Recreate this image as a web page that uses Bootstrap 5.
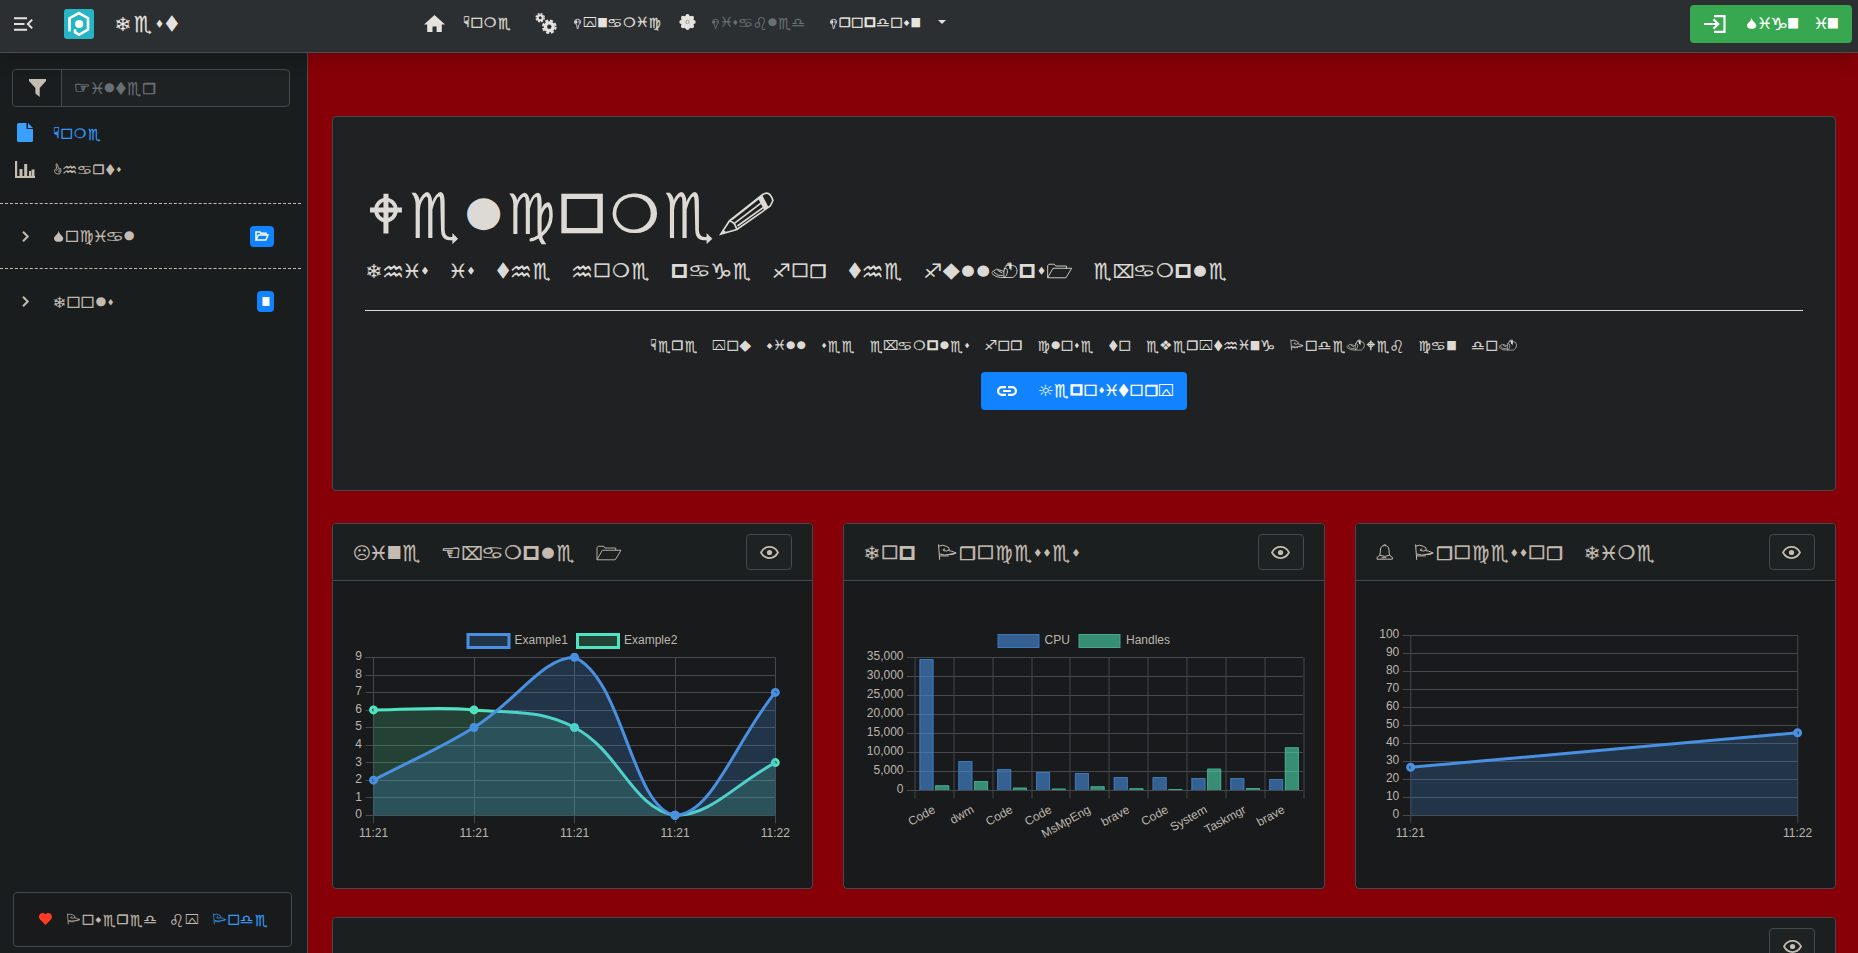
<!DOCTYPE html>
<html lang="en" data-bs-theme="dark">
<head>
<meta charset="utf-8">
<title>Test</title>
<link href="https://cdn.jsdelivr.net/npm/bootstrap@5.3.0/dist/css/bootstrap.min.css" rel="stylesheet">
<script src="https://cdn.jsdelivr.net/npm/bootstrap@5.3.0/dist/js/bootstrap.bundle.min.js"></script>
<style>
html,body{height:100%;overflow:hidden}
body{background:#870007;color:#dddad5;font-family:"Liberation Sans",sans-serif;font-size:14px}
svg{display:block;flex:none;overflow:visible}
h1{color:inherit}
.sym{display:block;flex:none}
.topbar{height:53px;background:#2b2f32;border-bottom:1px solid #484e51;padding:0 6px 5px 13.5px;box-shadow:0 8px 16px rgba(0,0,0,.15);color:#e6e3df;position:relative;z-index:2}
.topbar .nav-sym{margin-top:-2px}
.caret{border:4px solid transparent;border-top-color:#e6e3df;border-bottom:0;margin:-3px 0 0 18px}
.signin{width:162px;height:38px;background:#37a84f;border:0;border-radius:4px;padding:0 14px;color:#fff}
.side{width:308px;background:#1a1d1e;border-right:1px solid #484e51;color:#c4bcb1}
.filterbox{height:38px;width:278px;margin:16px 0 0 12px;border:1px solid #43494c;border-radius:4px;background:#1f2223}
.filterbox .fi{width:49px;height:100%;border-right:1px solid #43494c;background:#1a1d1e;padding-left:16px;border-radius:4px 0 0 4px}
.side-row{height:36.6px;padding-left:15px}
.side-row .ic{width:39px}
.group{width:301px;border-top:1px dashed #c4bcb1;height:65.7px;padding-left:15px;padding-right:27px}
.group .ic{width:39px;padding-left:7px}
.pill{height:21px;background:#1283ff;border-radius:4px;color:#fff}
.powered{width:279px;height:55px;margin:auto 0 6px 13px;border:1px solid #43494c;border-radius:4px;background:#181a1b;padding:0 0 1px 25px}
.main{padding:63px 22px 0 24px;min-width:0;overflow:hidden}
.card{border:1px solid #43494c;border-radius:4px;background:#181a1b;overflow:hidden}
.hero{height:375px;background:#1f2122;padding:75px 32px 0}
.hero hr{margin:32px 0 0;border-color:#dddad5;opacity:1}
.cta{width:206px;height:38px;border:0;border-radius:4px;background:#1283ff;color:#fff;padding:0 14px 0 16px}
.tiles{margin-top:32px;gap:30px}
.tiles .card{flex:1 1 0;min-width:0;height:366px}
.head{height:57px;background:#1b1f20;border-bottom:1px solid #43494c;padding:0 20px 0 21px;color:#c4bcb1}
.eye{width:46px;height:36px;border:1px solid #43494c;border-radius:4px;background:#1f2223;color:#c4bcb1;padding:0}
.last{margin-top:28px;height:100px}
.plot text{font:12px "Liberation Sans",sans-serif;fill:#bdb6ad}
</style>
</head>
<body class="d-flex flex-column">
<header class="topbar d-flex align-items-center flex-shrink-0">
  <svg width="19" height="14" viewBox="0 0 19 14" fill="none" stroke="currentColor" stroke-width="2"><path d="M0 1.2h13M0 7h10.5M0 12.8h13M18.2 2.6 13.8 7l4.4 4.4"/></svg>
  <svg style="margin-left:31.5px" width="30" height="30" viewBox="0 0 30 30"><rect width="30" height="30" rx="3" fill="#25b5c5"/><path d="M5.500 22.500V9.200L15 4l9 5.200v11.300L15 25.800l-4-2.600v-3" fill="none" stroke="#fff" stroke-width="2.600"/><circle cx="15.200" cy="15" r="4.100" fill="#fff"/></svg>
  <span class="sym" style="margin-left:22px" data-t="Test" data-s="20" data-w="62"></span>
  <nav class="d-flex align-items-center" style="margin-left:245.500px">
    <svg width="21" height="17" viewBox="0 0 21 17" fill="currentColor"><path d="M10.500 0 21 9.500h-3.200V17H12.600v-5.500H8.500V17H3.200V9.500H0z"/></svg>
    <span class="sym nav-sym" style="margin-left:19px" data-t="Home" data-s="14" data-w="46"></span>
    <svg style="margin-left:25px" width="22" height="21" viewBox="0 0 22 21" fill="none" stroke="currentColor"><circle cx="5.200" cy="4.700" r="2.500" stroke-width="2"/><circle cx="5.200" cy="4.700" r="4" stroke-width="1.500" stroke-dasharray="2 1.140"/><circle cx="14.300" cy="13.700" r="3.900" stroke-width="3.400"/><circle cx="14.300" cy="13.700" r="6.300" stroke-width="2" stroke-dasharray="3 1.950"/></svg>
    <span class="sym nav-sym" style="margin-left:17.500px" data-t="Dynamic" data-s="14" data-w="86"></span>
    <svg style="margin:-4px 0 0 19px" width="17" height="16" viewBox="0 0 17 16" fill="currentColor"><circle cx="8.500" cy="8" r="6.600"/><g><circle cx="8.500" cy="2" r="2"/><circle cx="8.500" cy="14" r="2"/><circle cx="2.300" cy="8" r="2"/><circle cx="14.700" cy="8" r="2"/><circle cx="4" cy="3.700" r="2"/><circle cx="13" cy="3.700" r="2"/><circle cx="4" cy="12.300" r="2"/><circle cx="13" cy="12.300" r="2"/></g><circle cx="8.500" cy="8" r="1.700" fill="none" stroke="#8b8d8e" stroke-width=".8"/></svg>
    <span class="sym nav-sym" style="margin-left:15.500px;color:#686f75" data-t="Disabled" data-s="14" data-w="92"></span>
    <span class="sym nav-sym" style="margin-left:26.500px" data-t="Dropdown" data-s="14" data-w="90"></span>
    <span class="caret"></span>
  </nav>
  <button class="signin ms-auto d-flex align-items-center">
    <svg width="22" height="18" viewBox="0 0 22 18" fill="none" stroke="currentColor" stroke-width="2.200"><path d="M10 1.200h10.500v15.600H10M0 9h14M9.500 4.300 14.200 9l-4.700 4.700"/></svg>
    <span class="sym" style="margin:-2px 0 0 21px" data-t="Sign In" data-s="16" data-w="91"></span>
  </button>
</header>
<div class="d-flex flex-fill" style="min-height:0">
  <aside class="side d-flex flex-column flex-shrink-0">
    <div class="filterbox d-flex align-items-center">
      <div class="fi d-flex align-items-center"><svg width="17" height="18" viewBox="0 0 17 18" fill="currentColor"><path d="M0 0h17v2l-6.300 7v9L6.400 14.500V9L0 2z"/></svg></div>
      <span class="sym" style="margin-left:13px;color:#686f75" data-t="Filter" data-s="16" data-w="80"></span>
    </div>
    <div style="height:7.500px"></div>
    <div class="side-row d-flex align-items-center" style="color:#38a0ff"><span class="ic"><svg style="margin-left:2px" width="16" height="19" viewBox="0 0 16 19" fill="currentColor"><path d="M1.500 0H9.500v6H16v11.500a1.500 1.500 0 0 1-1.500 1.500H1.500A1.500 1.500 0 0 1 0 17.500v-16A1.500 1.500 0 0 1 1.500 0zM11 0l5 5h-5z"/></svg></span><span class="sym" data-t="Home" data-s="14" data-w="46"></span></div>
    <div class="side-row d-flex align-items-center"><span class="ic"><svg width="20" height="17" viewBox="0 0 20 17" fill="currentColor"><path d="M0 0h2.200v15H20v2H0zM4.500 8h3v7h-3zM9.200 3h3v12h-3zM14 10h2V15h-2zM16.500 8.500h3V15h-3z"/></svg></span><span class="sym" data-t="Charts" data-s="14" data-w="67"></span></div>
    <div style="height:15px"></div>
    <div class="group d-flex align-items-center"><span class="ic"><svg width="7" height="11" viewBox="0 0 7 11" fill="none" stroke="currentColor" stroke-width="2"><path d="M1 .8 5.700 5.500 1 10.200"/></svg></span><span class="sym" data-t="Social" data-s="16" data-w="80"></span>
      <span class="pill ms-auto d-flex align-items-center justify-content-center" style="width:24px"><svg width="14" height="10" viewBox="0 0 14 10" fill="none" stroke="currentColor" stroke-width="1.500"><path d="M1 8.800V1h4l1 1.200h5V4M1 9 3.500 4H13l-2.200 5z"/></svg></span></div>
    <div class="group d-flex align-items-center"><span class="ic"><svg width="7" height="11" viewBox="0 0 7 11" fill="none" stroke="currentColor" stroke-width="2"><path d="M1 .8 5.700 5.500 1 10.200"/></svg></span><span class="sym" data-t="Tools" data-s="16" data-w="59"></span>
      <span class="pill ms-auto d-flex align-items-center justify-content-center" style="width:17px"><svg width="8" height="9" viewBox="0 0 8 9" fill="currentColor"><path d="M.5 0h7v9h-7z"/></svg></span></div>
    <div class="powered d-flex align-items-center">
      <svg width="13" height="12" viewBox="0 0 13 12" fill="#ff3b22"><path d="M6.500 12 1 6.500C-1.500 3.500 1 0 3.600 0 5 0 6 .7 6.500 1.600 7 .7 8 0 9.400 0 12 0 14.500 3.500 12 6.500z"/></svg>
      <span class="sym" style="margin-left:15px" data-t="Powered" data-s="14" data-w="89"></span>
      <span class="sym" style="margin-left:15px" data-t="by" data-s="14" data-w="27"></span>
      <span class="sym" style="margin-left:15px;color:#38a0ff" data-t="Pode" data-s="14" data-w="54"></span>
    </div>
  </aside>
  <main class="main flex-fill">
    <section class="card hero">
      <h1 class="m-0"><span class="sym" style="margin-left:5px" data-t="Welcome!" data-s="56" data-w="404"></span></h1>
      <span class="sym" style="margin:30px 0 0 2px" data-t="This is the home page for the full.ps1 example" data-s="20" data-w="859"></span>
      <hr>
      <div class="d-flex flex-column align-items-center">
        <span class="sym" style="margin-top:29px" data-t="Here you will see examples for close to everything Pode.Web can do." data-s="14" data-w="866"></span>
        <button class="cta d-flex align-items-center" style="margin-top:21.500px">
          <svg width="20" height="10" viewBox="0 0 20 10" fill="none" stroke="currentColor" stroke-width="2.200"><path d="M9 1.100H5a3.900 3.900 0 0 0 0 7.800h4M11 1.100h4a3.900 3.900 0 0 1 0 7.800h-4M6 5h8"/></svg>
          <span class="sym" style="margin:-2px 0 0 22px" data-t="Repository" data-s="16" data-w="134"></span>
        </button>
      </div>
    </section>
    <section class="tiles d-flex">
      <div class="card"><div class="head d-flex align-items-center"><span class="sym" data-t="Line Example 1" data-s="20" data-w="267"></span><button class="eye ms-auto"></button></div><svg class="plot" id="lines" viewBox="333 581 480 306" width="480" height="306"></svg></div>
      <div class="card"><div class="head d-flex align-items-center"><span class="sym" data-t="Top Processes" data-s="20" data-w="214"></span><button class="eye ms-auto"></button></div><svg class="plot" id="procs" viewBox="844.500 581 480 306" width="480" height="306"></svg></div>
      <div class="card"><div class="head d-flex align-items-center"><span class="sym" data-t="% Processor Time" data-s="20" data-w="277"></span><button class="eye ms-auto"></button></div><svg class="plot" id="cputime" viewBox="1355.700 581 480 306" width="480" height="306"></svg></div>
    </section>
    <section class="card last"><div class="head d-flex align-items-center"><button class="eye ms-auto"></button></div></section>
  </main>
</div>
<script>
// Symbol alphabet: [character, advance, left, right, top, bottom, outline weight (small), outline weight (display)], all in em
const M={
T:['❄',.86,.08,.75,.70,0],e:['♏',.98,.07,.91,.74,-.20,.01,0],s:['⧫',.458,.09,.39,.53,.13],t:['⧫',.73,.06,.67,.76,-.07],
H:['☟',.51,.06,.42,.81,0,.03],o:['□',.891,.07,.815,.71,0,.025,.045],m:['❍',.95,.08,.88,.71,0,.02,.025],
y:['⍓',1,.06,.93,.69,0],n:['■',.746,.07,.68,.68,.02],a:['♋',1.06,.06,.97,.60,.05,0],i:['♓',.8,.07,.73,.73,0,.01],
c:['♍',.93,.08,.86,.73,-.195,.01,0],b:['♌',.95,.06,.85,.75,-.2],l:['●',.746,.075,.67,.64,.066],d:['♎',1.02,.06,.9,.63,.07,.01],
r:['❒',.891,.07,.83,.71,0,.03],p:['□',.891,.07,.815,.71,0,.10],w:['◆',.55,.06,.46,.54,.12],g:['♑',1.06,.08,1,.72,-.08,.01],
F:['☞',1.07,.06,.93,.62,.13,.03],h:['♒',1.04,.05,.97,.62,0],f:['♐',.92,.05,.85,.73,0],u:['◆',.89,.02,.87,.74,-.08],
x:['⌧',1.03,.05,1,.70,0,.01],v:['❖',.9,.05,.84,.71,0],R:['☼',.96,.05,.88,.71,0],L:['☹',.86,.04,.82,.74,-.02],
E:['☜',.98,.05,.88,.63,.1,.03],I:['♓',.8,.07,.73,.73,0,.01],
W:[0,.75,.09,.66,.71,0,'<path fill="none" stroke-width=".09" d="M50 0V100M0 41H100"/><ellipse cx="50" cy="41" rx="31" ry="26" fill="none" stroke-width=".07"/>'],
S:[0,.76,.06,.64,.71,0,'<path stroke="none" d="M50 0C52 32 100 48 100 70C100 88 78 100 50 100S0 88 0 70C0 48 48 32 50 0Z"/>'],
C:[0,.66,.06,.58,.77,0,'<path fill="none" stroke-width=".06" d="M35 48 28 5Q40-5 48 12L62 45Q105 40 92 60Q100 75 85 85Q85 100 55 96Q15 98 8 72Q5 50 35 48M60 60H90M58 76H88M30 65Q45 60 55 52"/>'],
D:[0,.68,.06,.58,.62,-.13,'<path fill="none" stroke-width=".06" d="M35 55 45 95Q58 100 60 85L66 58Q88 48 92 30Q88 5 50 5Q10 5 5 30Q5 50 35 55M62 40 88 38M58 24H86"/><circle cx="30" cy="32" r="16" stroke="none"/>'],
P:[0,1.08,.05,.97,.77,0,'<path fill="none" stroke-width=".05" d="M4 0 10 100M5 12Q25-2 45 12Q65 18 62 36Q50 48 30 40Q25 30 40 30M10 62Q40 75 60 65L100 56Q70 40 58 40M62 66Q82 70 96 58M10 75H60"/>'],
'.':[0,1.37,.02,1.34,.74,-.02,'<path fill="none" stroke-width=".045" d="M48 95H82Q98 80 98 45Q96 18 82 16H60Q48 25 48 60V95Q60 90 62 50Q60 30 48 35M55 20 65 0H75V48M2 62 20 40 48 55M2 68Q20 100 48 95M10 60Q25 90 44 82M24 48 42 66"/><path stroke="none" d="M60 4H76V38H68V16Z"/>'],
'1':[0,1.3,.08,1.28,.70,0,'<path fill="none" stroke-width=".045" d="M0 100V14L5 3H28L33 16H78V32M0 100 22 32H100L76 100Z"/>'],
'!':[0,1.03,.06,1.02,.74,-.02,'<path fill="none" stroke-width=".03" d="M1 99 17 68 79 6Q92-5 98 20L93 33 31 88ZM17 68Q27 70 31 88M22 64 73 14M27 73 80 22M32 80 86 31"/><path stroke="none" d="M1 99 5 88 11 94ZM70 14 78 7 90 36 82 43Z"/>'],
'%':[0,.9,.06,.83,.75,0,'<path fill="none" stroke-width=".05" d="M18 70Q22 55 22 35Q24 5 50 5Q76 5 78 35Q78 55 82 70M18 70 0 84V96H100V84L82 70M18 70Q50 84 82 70M30 86H60M40 5Q50-8 60 5"/>']
};
const cx=document.createElement('canvas').getContext('2d');
cx.font='200px "DejaVu Sans"';
function build(el){
  const s=+el.dataset.s,t=[...el.dataset.t],W=+el.dataset.w,adv=c=>c===' '?1:M[c][1];
  let total=0;t.forEach((c,k)=>{if(k<t.length-1)total+=adv(c)*s});
  const first=M[t[0]][2]*s,last=M[t.at(-1)][3]*s;
  const k=t.length>1?(W+first-last)/total:1;
  let x=-first,out='';
  for(const c of t){
    if(c!==' '){
      const m=M[c],x0=x+m[2]*s,w=(m[3]-m[2])*s,y0=(.74-m[4])*s,h=(m[4]-m[5])*s;
      if(m[0]){
        const q=cx.measureText(m[0]),f=s/200,L=-q.actualBoundingBoxLeft*f,R=q.actualBoundingBoxRight*f,A=q.actualBoundingBoxAscent*f,D=q.actualBoundingBoxDescent*f;
        const b=((s>30?m[7]??m[6]:m[6])||0)*s,ww=w-b,hh=h-b,sx=ww/(R-L),sy=hh/(A+D);
        out+=`<text transform="translate(${x0+b/2-L*sx} ${y0+b/2+A*sy}) scale(${sx} ${sy})" font-size="${s}" ${b?`stroke="currentColor" stroke-width="${b}" vector-effect="non-scaling-stroke"`:''}>${m[0]}</text>`;
      }else out+=`<svg x="${x0}" y="${y0}" width="${w}" height="${h}" viewBox="0 0 100 100" preserveAspectRatio="none" stroke="currentColor">${m[6].replace(/stroke-width="([.\d]+)"/g,(_,v)=>`stroke-width="${v*s}"`).replace(/<(path|ellipse)/g,'<$1 vector-effect="non-scaling-stroke"')}</svg>`;
    }
    x+=adv(c)*s*k;
  }
  el.innerHTML=`<svg width="${W}" height="${.74*s}" fill="currentColor" font-family="DejaVu Sans, sans-serif" font-weight="400">${out}</svg>`;
}
document.querySelectorAll('.sym').forEach(build);
document.querySelectorAll('.eye').forEach(e=>e.innerHTML='<svg class="mx-auto" width="19" height="13" viewBox="0 0 19 13" fill="none" stroke="currentColor" stroke-width="1.7"><path d="M1 6.500C5-.9 14-.9 18 6.500C14 13.900 5 13.900 1 6.500Z"/><circle cx="9.500" cy="6.500" r="2.600" fill="currentColor" stroke="none"/></svg>');

// Charts
const G='#43494c',B='#4a90e2',N='#50e3c2',Bf='rgba(74,144,226,.22)',Nf='rgba(80,227,160,.2)';
const line=(a,b,c,d)=>`<path d="M${Math.round(a)+.5} ${Math.round(b)+.5}L${Math.round(c)+.5} ${Math.round(d)+.5}" stroke="${G}"/>`;
const txt=(x,y,s,a='middle',r='')=>`<text x="${x}" y="${y}" text-anchor="${a}" ${r}>${s}</text>`;
function grid(x0,x1,y0,y1,xs,ys){
  let o='';ys.forEach((v,i)=>{const y=y0+(y1-y0)*i/(ys.length-1);o+=line(x0-8,y,x1,y)+txt(x0-11,y+3.200,v,'end')});
  xs.forEach(x=>o+=line(x,y1,x,y0+8));return o;
}
function curve(p,fill,col,base,top){
  const c=p.map((q,i)=>{const a=p[i-1]||q,b=p[i+1]||q,d1=Math.hypot(q[0]-a[0],q[1]-a[1]),d2=Math.hypot(b[0]-q[0],b[1]-q[1]),s=d1+d2||1,f1=.4*d1/s,f2=.4*d2/s,cl=y=>Math.max(top,Math.min(base,y));
    return[[q[0]-f1*(b[0]-a[0]),cl(q[1]-f1*(b[1]-a[1]))],[q[0]+f2*(b[0]-a[0]),cl(q[1]+f2*(b[1]-a[1]))]]});
  let d='M'+p[0];for(let i=1;i<p.length;i++)d+=`C${c[i-1][1]} ${c[i][0]} ${p[i]}`;
  return `<path d="${d}L${p.at(-1)[0]} ${base}L${p[0][0]} ${base}Z" fill="${fill}"/><path d="${d}" fill="none" stroke="${col}" stroke-width="3"/>`+p.map(q=>`<circle cx="${q[0]}" cy="${q[1]}" r="3" fill="${fill}" stroke="${col}" stroke-width="3"/>`).join('');
}
const xs=[373.500,474,574.500,675,775.300],Y=v=>815.300-v*17.560;
lines.innerHTML=grid(373,775,815,657,xs.map(x=>x-.5),[0,1,2,3,4,5,6,7,8,9])
 +curve([6,6,5,0,3].map((v,i)=>[xs[i],Y(v)]),Nf,N,815.300,657.300)+curve([2,5,9,0,7].map((v,i)=>[xs[i],Y(v)]),Bf,B,815.300,657.300)
 +xs.map((x,i)=>txt(x,837,i<4?'11:21':'11:22')).join('')
 +`<rect x="468" y="634.500" width="41" height="13" fill="${Bf}" stroke="${B}" stroke-width="3"/><rect x="577.500" y="634.500" width="41" height="13" fill="${Nf}" stroke="${N}" stroke-width="3"/>`+txt(514.500,644,'Example1','start')+txt(624,644,'Example2','start');
const names=['Code','dwm','Code','Code','MsMpEng','brave','Code','System','Taskmgr','brave'],cpu=[432,738,762,771,774,786,786,789,789,792],hnd=[811,798,818,821,814,820,822,761,819,697];
let o=grid(915,1303,790,657,Array.from({length:11},(_,i)=>915+38.850*i),['0','5,000','10,000','15,000','20,000','25,000','30,000','35,000']);
const bar=(x,t,f,c)=>{const y=515+t/3;return `<rect x="${x}" y="${y}" width="14" height="${790-y}" fill="${f}"/><path d="M${x+.5} 790V${y+.5}h13V790" fill="none" stroke="${c}"/>`};
const CB='rgba(74,144,226,.6)',CN='rgba(80,227,180,.58)';
names.forEach((n,i)=>{const x=915+38.850*i;o+=bar(x+5,cpu[i],CB,'#3f76b5')+bar(x+20.700,hnd[i],CN,'#46a68c')+txt(x+21.500,812,n,'end',`transform="rotate(-29 ${x+21.500} 812)"`)});
o+=`<rect x="998.500" y="634.500" width="41" height="13" fill="${CB}" stroke="#3f76b5"/><rect x="1079.500" y="634.500" width="41" height="13" fill="${CN}" stroke="#46a68c"/>`+txt(1045,644,'CPU','start')+txt(1126.500,644,'Handles','start');
procs.innerHTML=o;
cputime.innerHTML=grid(1410,1797,815,635,[1410,1797],[0,10,20,30,40,50,60,70,80,90,100])+curve([[1410.300,767.300],[1797.300,732.700]],Bf,B,815.300,635)+txt(1410,837,'11:21')+txt(1797.300,837,'11:22');
</script>
</body>
</html>
